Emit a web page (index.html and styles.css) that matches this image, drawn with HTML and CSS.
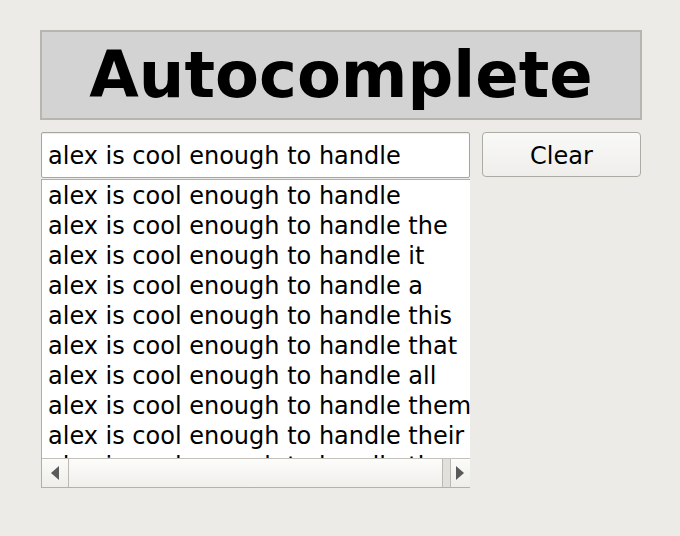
FILE: index.html
```html
<!DOCTYPE html>
<html>
<head>
<meta charset="utf-8">
<link rel="stylesheet" href="styles.css">
</head>
<body>
<div class="app">
  <div class="heading">Autocomplete</div>
  <div class="row">
    <div class="left">
      <div class="entry">alex is cool enough to handle</div>
      <div class="listbox">
        <div class="items">
          <div class="item">alex is cool enough to handle</div>
          <div class="item">alex is cool enough to handle the</div>
          <div class="item">alex is cool enough to handle it</div>
          <div class="item">alex is cool enough to handle a</div>
          <div class="item">alex is cool enough to handle this</div>
          <div class="item">alex is cool enough to handle that</div>
          <div class="item">alex is cool enough to handle all</div>
          <div class="item">alex is cool enough to handle them</div>
          <div class="item">alex is cool enough to handle their</div>
          <div class="item">alex is cool enough to handle these</div>
        </div>
        <div class="hscroll">
          <div class="arrow-btn left-btn"><svg width="8" height="14" viewBox="0 0 8 14"><polygon points="8,0 8,14 0,7" fill="#5a5a5a"/></svg></div>
          <div class="slider"></div>
          <div class="trough"></div>
          <div class="arrow-btn right-btn"><svg width="8" height="14" viewBox="0 0 8 14"><polygon points="0,0 0,14 8,7" fill="#5a5a5a"/></svg></div>
        </div>
      </div>
    </div>
    <div class="clear-btn">Clear</div>
  </div>
</div>
</body>
</html>
```

FILE: styles.css
```css
html, body {
  margin: 0;
  padding: 0;
  background: #edebe7;
  width: 680px;
  height: 536px;
  overflow: hidden;
}
.app {
  padding: 30px 0 0 40px;
  font-family: "DejaVu Sans", sans-serif;
  color: #000;
}
.heading {
  width: 598px;
  height: 86px;
  border: 2px solid #b8b4ae;
  background: #d3d3d3;
  font-weight: bold;
  font-size: 64px;
  line-height: 86px;
  text-align: center;
}
.row {
  display: flex;
  margin-top: 12px;
  align-items: flex-start;
}
.left {
  width: 429px;
  margin-left: 1px;
  display: flex;
  flex-direction: column;
}
.entry {
  height: 44px;
  width: 421px;
  border: 1px solid #a8a49e;
  border-radius: 2px;
  background: #fff;
  font-size: 24px;
  line-height: 46px;
  padding-left: 6px;
  box-sizing: content-box;
  white-space: nowrap;
  overflow: hidden;
  box-shadow: inset 0 1px 1px rgba(0,0,0,0.08);
}
.listbox {
  margin-top: 1px;
  border-top: 1px solid #b0aca6;
  border-left: 1px solid #b0aca6;
  background: #fff;
  width: 428px;
}
.items {
  height: 277px;
  padding-top: 1px;
  overflow: hidden;
  font-size: 24px;
  line-height: 30px;
  padding-left: 6px;
  white-space: nowrap;
}
.hscroll {
  display: flex;
  height: 28px;
  border-top: 1px solid #c4c0ba;
  border-bottom: 1px solid #b4b0aa;
  background: #f3f2ef;
}
.arrow-btn {
  display: flex;
  align-items: center;
  justify-content: center;
  background: linear-gradient(#fbfbfa, #eeede9);
}
.left-btn {
  width: 26px;
  border-right: 1px solid #bcb8b2;
}
.right-btn {
  flex: 1;
  justify-content: flex-start;
  padding-left: 5px;
}
.slider {
  width: 373px;
  background: linear-gradient(#fcfcfb, #f0efec);
  border-right: 1px solid #bcb8b2;
}
.trough {
  width: 7px;
  background: #e2e0dc;
  border-right: 1px solid #bcb8b2;
}
.clear-btn {
  margin-left: 12px;
  width: 157px;
  height: 43px;
  border: 1px solid #aeaaa4;
  border-radius: 4px;
  background: linear-gradient(#f9f9f8, #efeeeb);
  font-size: 24px;
  line-height: 46px;
  text-align: center;
}
```
